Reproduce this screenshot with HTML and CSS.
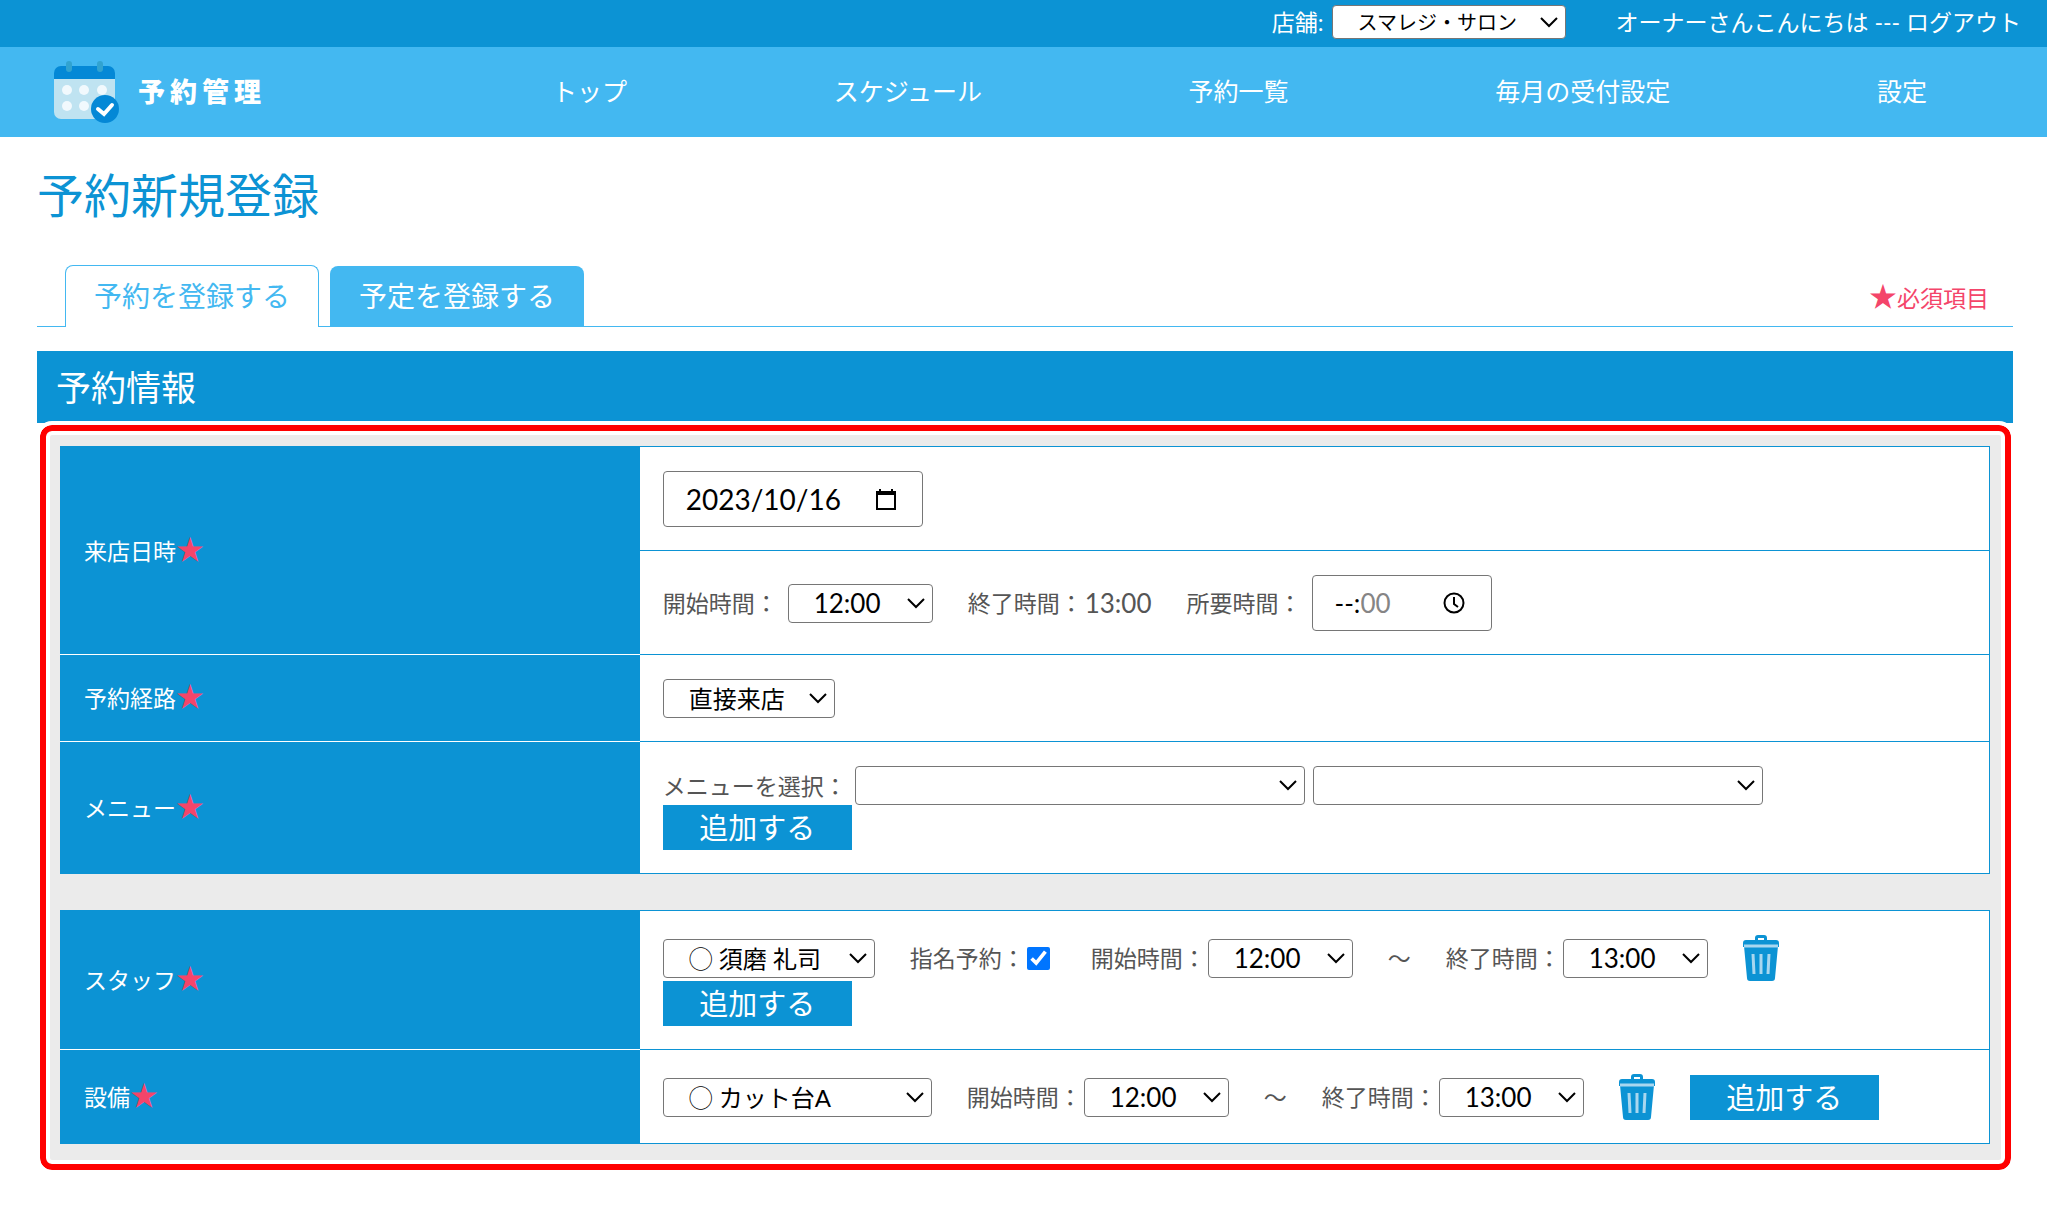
FILE: index.html
```html
<!doctype html>
<html lang="ja">
<head>
<meta charset="utf-8">
<title>予約新規登録</title>
<link rel="stylesheet" href="styles.css">
</head>
<body>
<div class="topbar">
  <label for="shop">店舗:</label>
  <select id="shop" class="shop"><option>スマレジ・サロン</option></select>
  <p class="user">オーナーさんこんにちは --- <a href="#">ログアウト</a></p>
</div>
<header class="header">
  <a href="#" class="logo">
    <svg width="68" height="62" viewBox="0 0 68 62">
      <path d="M1 18H62V51a7 7 0 0 1-7 7H8a7 7 0 0 1-7-7z" fill="#bfe3f1"/>
      <path d="M1 18V12a7 7 0 0 1 7-7H55a7 7 0 0 1 7 7V18z" fill="#0488d6"/>
      <rect x="13" y="0" width="6" height="11" rx="3" fill="#31a3d0"/>
      <rect x="44" y="0" width="6" height="11" rx="3" fill="#31a3d0"/>
      <g fill="#f1f9fd">
        <circle cx="14" cy="29" r="5"/><circle cx="31" cy="29" r="5"/><circle cx="49" cy="29" r="5"/>
        <circle cx="14" cy="45" r="5"/><circle cx="31" cy="45" r="5"/><circle cx="49" cy="45" r="5"/>
      </g>
      <circle cx="52" cy="48" r="14" fill="#0488d6"/>
      <path d="M45 48l6 5 8-9" fill="none" stroke="#fff" stroke-width="4" stroke-linecap="round"/>
    </svg>
    <span>予約管理</span>
  </a>
  <nav class="nav">
    <a href="#">トップ</a>
    <a href="#">スケジュール</a>
    <a href="#">予約一覧</a>
    <a href="#">毎月の受付設定</a>
    <a href="#">設定</a>
  </nav>
</header>

<main class="main">
  <h1>予約新規登録</h1>
  <div class="tabs">
    <a href="#" class="tab active">予約を登録する</a>
    <a href="#" class="tab">予定を登録する</a>
    <p class="required"><span class="star">★</span>必須項目</p>
  </div>

  <h2>予約情報</h2>
  <form class="panel">
    <table class="form-table">
      <tr>
        <th rowspan="2">来店日時<span class="star">★</span></th>
        <td>
          <div class="field date-field">
            <input type="text" id="date" value="2023/10/16" aria-label="来店日">
            <svg width="20" height="22" viewBox="0 0 20 22"><path d="M1 4H19V21H1z" fill="none" stroke="#000" stroke-width="2"/><path d="M0 3H20V7H0zM3 1H5V4H3zM15 1H17V4H15z"/></svg>
          </div>
        </td>
      </tr>
      <tr>
        <td>
          <div class="line">
            <div class="item wide"><label for="start">開始時間：</label><select id="start" class="time"><option>12:00</option></select></div>
            <div class="item">終了時間：<span class="end">13:00</span></div>
            <div class="item wide">
              <label for="hours">所要時間：</label>
              <div class="field time-field">
                <input type="text" id="hours" class="hours" value="--:">
                <input type="text" class="minutes" value="00" readonly aria-label="分">
                <svg width="22" height="22" viewBox="0 0 22 22"><circle cx="11" cy="11" r="9.5" fill="none" stroke="#000" stroke-width="2"/><path d="M11 5V12L15 15" fill="none" stroke="#000" stroke-width="2"/></svg>
              </div>
            </div>
          </div>
        </td>
      </tr>
      <tr>
        <th>予約経路<span class="star">★</span></th>
        <td><div class="line"><select class="route" aria-label="予約経路"><option>直接来店</option></select></div></td>
      </tr>
      <tr>
        <th>メニュー<span class="star">★</span></th>
        <td>
          <div class="line menu-line">
            <label for="menu">メニューを選択：</label>
            <select id="menu" class="menu"><option></option></select>
            <select class="menu" aria-label="メニュー"><option></option></select>
          </div>
          <button type="button" class="add">追加する</button>
        </td>
      </tr>
    </table>

    <table class="form-table">
      <tr>
        <th>スタッフ<span class="star">★</span></th>
        <td>
          <div class="line">
            <select class="staff" aria-label="スタッフ"><option>◯ 須磨 礼司</option></select>
            <div class="item"><label for="nominate">指名予約：</label><input type="checkbox" id="nominate" checked></div>
            <div class="item last"><label for="staff-start">開始時間：</label><select id="staff-start" class="time"><option>12:00</option></select></div>
            <span>〜</span>
            <div class="item"><label for="staff-end">終了時間：</label><select id="staff-end" class="time"><option>13:00</option></select></div>
            <button type="button" class="trash" aria-label="削除">
              <svg width="36" height="46" viewBox="0 0 36 46"><path d="M12 5V3a3 3 0 0 1 3-3h6a3 3 0 0 1 3 3v2h9a3 3 0 0 1 3 3v4H0V8a3 3 0 0 1 3-3zM15 5h6V3h-6z"/><path d="M1 11H35L32 43a3 3 0 0 1-3 3H7a3 3 0 0 1-3-3z"/><path d="M1 11H35M10 19l1 20M18 19v20M26 19l-1 20" class="slots"/></svg>
            </button>
          </div>
          <button type="button" class="add">追加する</button>
        </td>
      </tr>
      <tr>
        <th>設備<span class="star">★</span></th>
        <td>
          <div class="line">
            <select class="equip" aria-label="設備"><option>◯ カット台A</option></select>
            <div class="item"><label for="equip-start">開始時間：</label><select id="equip-start" class="time"><option>12:00</option></select></div>
            <span>〜</span>
            <div class="item"><label for="equip-end">終了時間：</label><select id="equip-end" class="time"><option>13:00</option></select></div>
            <button type="button" class="trash" aria-label="削除">
              <svg width="36" height="46" viewBox="0 0 36 46"><path d="M12 5V3a3 3 0 0 1 3-3h6a3 3 0 0 1 3 3v2h9a3 3 0 0 1 3 3v4H0V8a3 3 0 0 1 3-3zM15 5h6V3h-6z"/><path d="M1 11H35L32 43a3 3 0 0 1-3 3H7a3 3 0 0 1-3-3z"/><path d="M1 11H35M10 19l1 20M18 19v20M26 19l-1 20" class="slots"/></svg>
            </button>
            <button type="button" class="add">追加する</button>
          </div>
        </td>
      </tr>
    </table>
  </form>
</main>
</body>
</html>
```

FILE: styles.css
```css
* {
  box-sizing: border-box;
}
body {
  margin: 0;
  background: #fff;
  color: #555;
  font-family: Lato, "Noto Sans CJK JP", sans-serif;
  font-size: 23px;
  line-height: 36px;
}
h1, h2, p {
  margin: 0;
  font-weight: normal;
}
a {
  color: inherit;
  text-decoration: none;
}
input, select, button {
  font-family: inherit;
}

.topbar {
  display: flex;
  align-items: center;
  justify-content: flex-end;
  height: 47px;
  padding: 0 26px 3px 0;
  background: #0c93d4;
  color: #fff;
}
.user {
  margin-left: 50px;
}
.header {
  display: flex;
  align-items: center;
  height: 90px;
  padding: 0 120px 0 53px;
  background: #43b8f1;
  color: #fff;
}
.logo {
  display: flex;
  align-items: center;
  gap: 17px;
  width: 499px;
  font-size: 27px;
  font-weight: 900;
  letter-spacing: 5px;
}
.nav {
  flex: 1;
  display: flex;
  justify-content: space-between;
  padding-bottom: 2px;
  font-size: 25px;
}

.main {
  padding: 0 34px 0 37px;
}
h1 {
  padding: 28px 0 32px;
  color: #0c93d4;
  font-size: 47px;
  line-height: 60px;
}
.tabs {
  display: flex;
  align-items: flex-end;
  gap: 11px;
  height: 70px;
  padding-left: 28px;
  border-bottom: 1px solid #43b8f1;
}
.tab {
  height: 60px;
  padding: 0 29px;
  border-radius: 8px 8px 0 0;
  background: #43b8f1;
  color: #fff;
  font-size: 28px;
  line-height: 60px;
}
.tab.active {
  height: 62px;
  margin-bottom: -1px;
  padding: 0 28px;
  border: 1px solid #43b8f1;
  border-bottom: 0;
  background: #fff;
  color: #43b8f1;
}
.required {
  margin-left: auto;
  padding: 0 24px 10px 0;
  color: #f4456a;
}
.star {
  color: #f4456a;
  font-size: 28px;
  line-height: 28px;
}
h2 {
  margin-top: 24px;
  padding: 0 19px;
  background: #0c93d4;
  color: #fff;
  font-size: 35px;
  line-height: 72px;
}

/* form area with the red frame */
.panel {
  margin: 2px 2px 0 3px;
  padding: 15px 15px 20px 14px;
  border: 6px solid #f00;
  border-radius: 12px;
  outline: 4px solid #fff;
  background: #ebebeb;
  box-shadow: inset 0 0 0 4px #fff;
}
.form-table {
  width: 100%;
  border-collapse: collapse;
  table-layout: fixed;
  background: #fff;
}
.form-table + .form-table {
  margin-top: 36px;
}
th, td {
  border: 1px solid #0c93d4;
  text-align: left;
}
th {
  width: 30%;
  padding: 0 23px;
  border-bottom-color: #fff;
  background: #0c93d4;
  color: #fff;
  font-weight: normal;
}
tr:last-child th {
  border-bottom-color: #0c93d4;
}
td {
  padding: 24px 23px 23px;
}
.line {
  display: flex;
  align-items: center;
  gap: 35px;
}
.item {
  display: flex;
  align-items: center;
  gap: 2px;
}
.item.wide {
  gap: 10px;
}
.item.last {
  margin-left: 6px;
}
.end {
  font-size: 26px;
}
.menu-line {
  gap: 8px;
}

select {
  height: 39px;
  padding: 0 25px;
  appearance: none;
  border: 1px solid #767676;
  border-radius: 4px;
  background: #fff url("data:image/svg+xml,%3Csvg xmlns='http://www.w3.org/2000/svg' width='18' height='11'%3E%3Cpath d='M1 1l8 8 8-8' fill='none' stroke='%23000' stroke-width='2'/%3E%3C/svg%3E") no-repeat right 7px center;
  color: #000;
  font-size: 24px;
}
.shop {
  width: 234px;
  height: 34px;
  margin-left: 8px;
  font-size: 20px;
}
.time {
  width: 145px;
  font-size: 26px;
}
.route {
  width: 172px;
}
.menu {
  width: 450px;
}
.staff {
  width: 212px;
}
.equip {
  width: 269px;
}
.field {
  display: flex;
  align-items: center;
  height: 56px;
  padding: 0 26px 0 22px;
  border: 1px solid #767676;
  border-radius: 4px;
  background: #fff;
}
.field input {
  min-width: 0;
  padding: 0;
  border: 0;
  outline: 0;
  background: none;
  color: #000;
  font-size: 26px;
}
.field svg {
  flex-shrink: 0;
  margin-left: auto;
}
.date-field {
  width: 260px;
}
.date-field input {
  width: 170px;
  font-size: 28px;
}
.time-field {
  width: 180px;
}
.time-field .hours {
  width: 26px;
}
.time-field .minutes {
  width: 40px;
  color: #858585;
}
input[type=checkbox] {
  width: 23px;
  height: 23px;
  margin: 0;
  accent-color: #0075ff;
}
button {
  padding: 0;
  border: 0;
  cursor: pointer;
}
.add {
  display: block;
  width: 189px;
  height: 45px;
  background: #0c93d4;
  color: #fff;
  font-size: 29px;
  line-height: 45px;
}
.trash {
  height: 46px;
  background: none;
  fill: #0c93d4;
}
.trash svg {
  display: block;
}
.slots {
  fill: none;
  stroke: #a9d7ef;
  stroke-width: 3;
}
```
